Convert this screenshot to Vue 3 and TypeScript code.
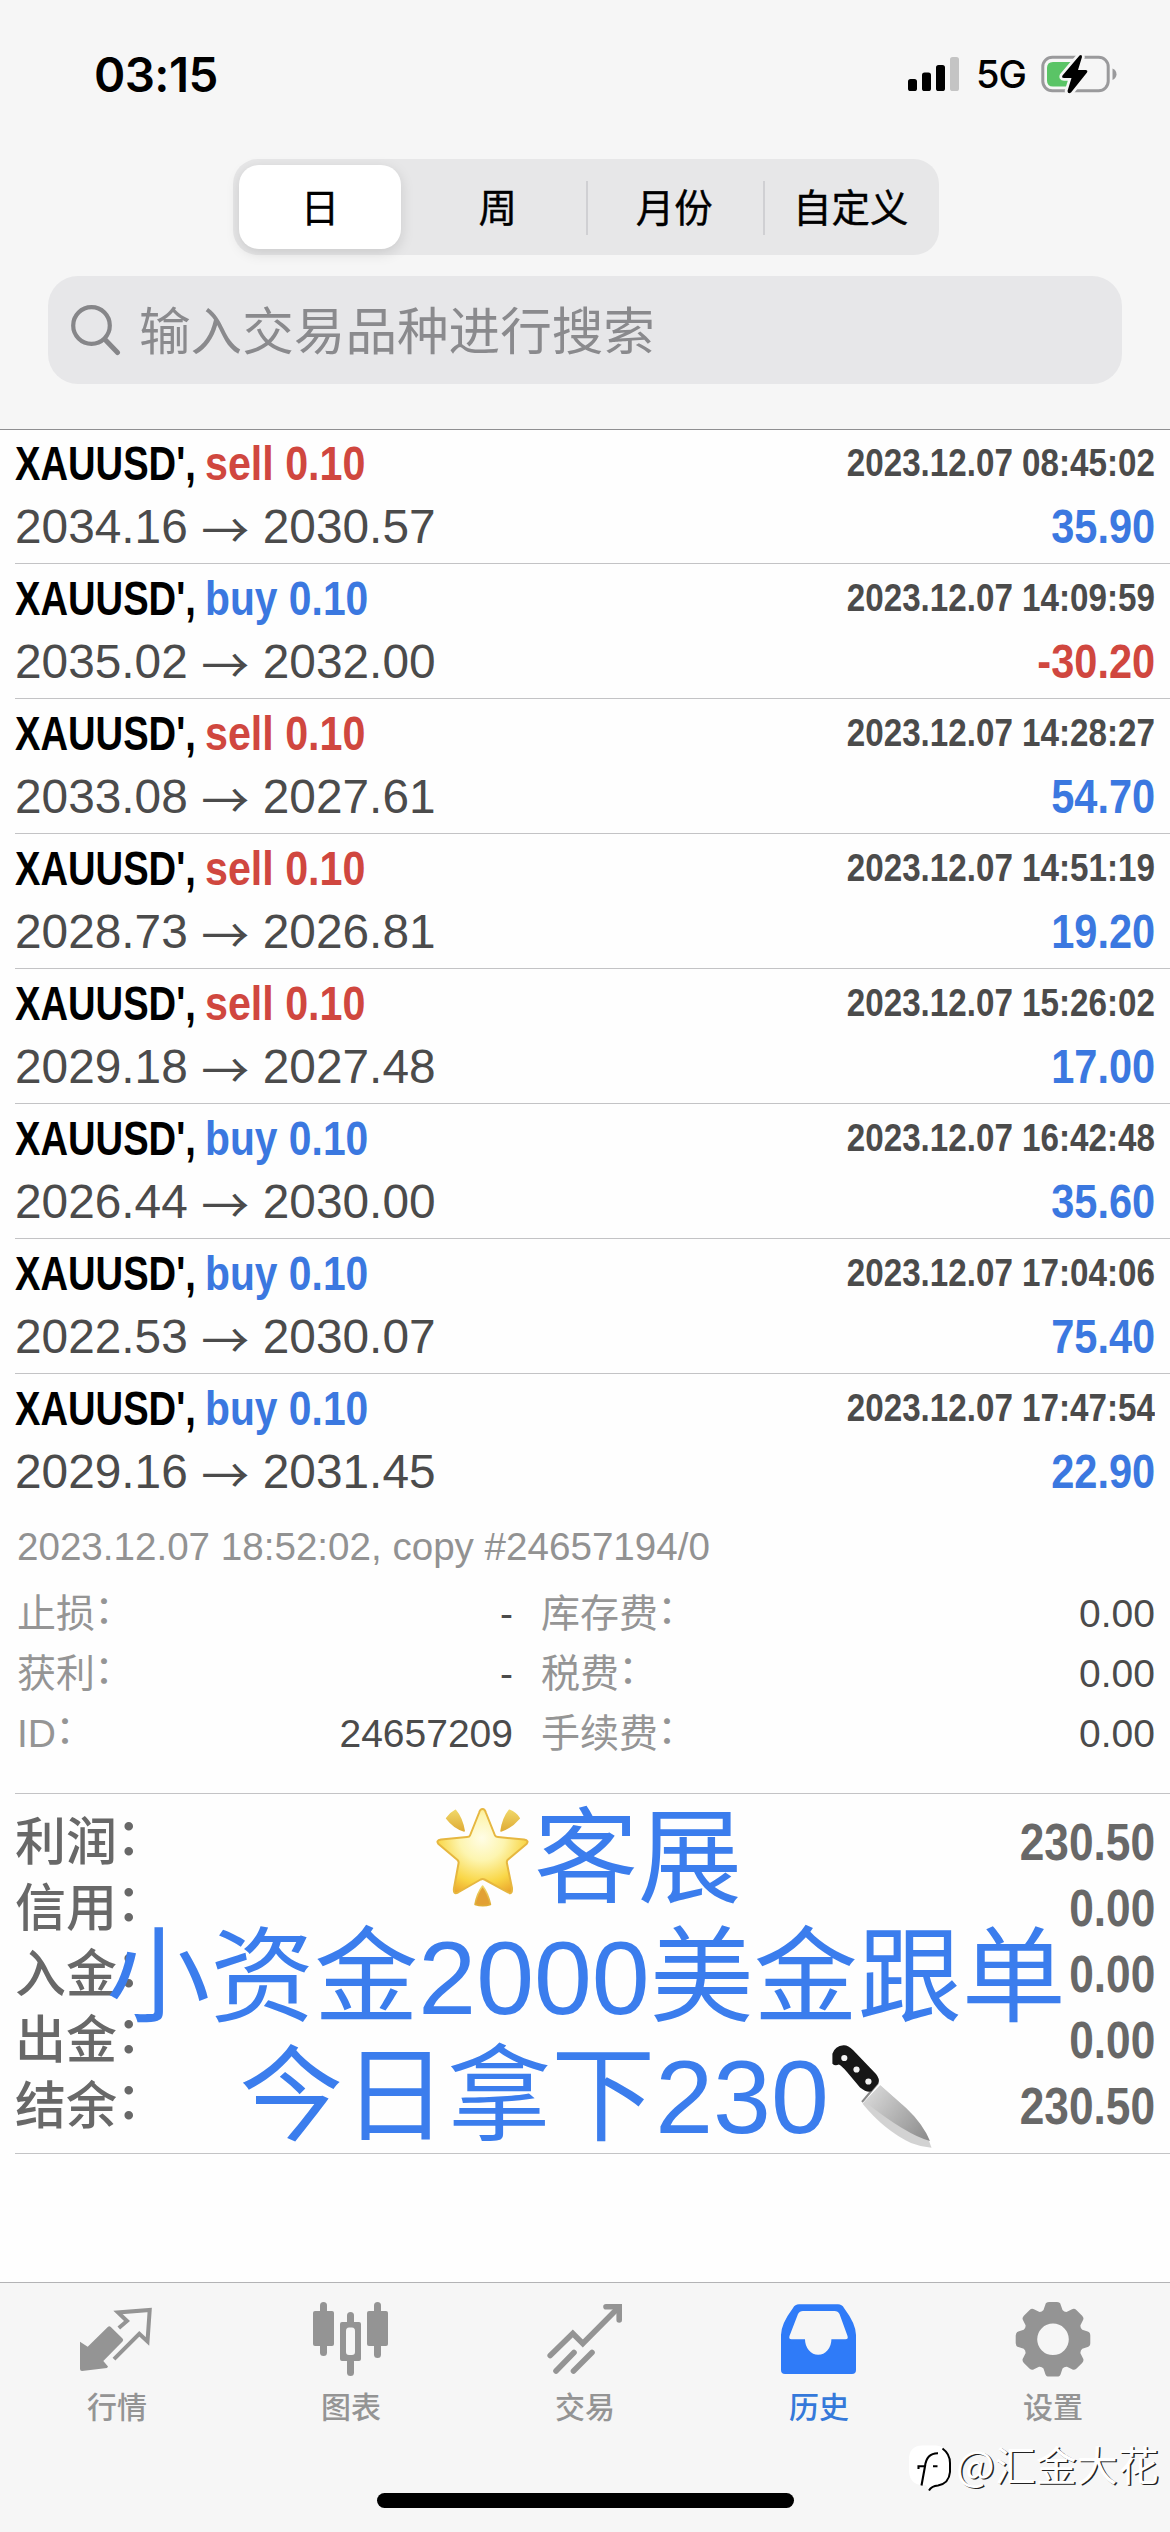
<script setup lang="ts">
interface Deal {
  side: 'sell' | 'buy'
  open: string
  close: string
  time: string
  profit: string
}

const periods = ['日', '周', '月份', '自定义']

const deals: Deal[] = [
  { side: 'sell', open: '2034.16', close: '2030.57', time: '2023.12.07 08:45:02', profit: '35.90' },
  { side: 'buy', open: '2035.02', close: '2032.00', time: '2023.12.07 14:09:59', profit: '-30.20' },
  { side: 'sell', open: '2033.08', close: '2027.61', time: '2023.12.07 14:28:27', profit: '54.70' },
  { side: 'sell', open: '2028.73', close: '2026.81', time: '2023.12.07 14:51:19', profit: '19.20' },
  { side: 'sell', open: '2029.18', close: '2027.48', time: '2023.12.07 15:26:02', profit: '17.00' },
  { side: 'buy', open: '2026.44', close: '2030.00', time: '2023.12.07 16:42:48', profit: '35.60' },
  { side: 'buy', open: '2022.53', close: '2030.07', time: '2023.12.07 17:04:06', profit: '75.40' },
  { side: 'buy', open: '2029.16', close: '2031.45', time: '2023.12.07 17:47:54', profit: '22.90' },
]

const details = [
  ['止损', '-', '库存费', '0.00'],
  ['获利', '-', '税费', '0.00'],
  ['ID', '24657209', '手续费', '0.00'],
]

const totals = [
  ['利润', '230.50'],
  ['信用', '0.00'],
  ['入金', '0.00'],
  ['出金', '0.00'],
  ['结余', '230.50'],
]

const tabs = [
  { id: 'quotes', label: '行情' },
  { id: 'charts', label: '图表' },
  { id: 'trade', label: '交易' },
  { id: 'history', label: '历史' },
  { id: 'settings', label: '设置' },
]

// Eight-tooth gear outline around the centre (42, 41.3)
function gearPath(): string {
  const at = (r: number, deg: number) => {
    const a = (deg * Math.PI) / 180
    return `${(42 + r * Math.cos(a)).toFixed(2)} ${(41.3 + r * Math.sin(a)).toFixed(2)}`
  }
  let d = ''
  for (let i = 0; i < 8; i++) {
    const c = i * 45
    d += `${i ? 'L' : 'M'}${at(30.8, c - 18)}L${at(35.5, c - 12.5)}Q${at(37.8, c - 11)} ${at(37.5, c - 6)}`
    d += `L${at(37.5, c + 6)}Q${at(37.8, c + 11)} ${at(35.5, c + 12.5)}L${at(30.8, c + 18)}Q${at(29.4, c + 22.5)} ${at(30.8, c + 27)}`
  }
  return d + 'Z'
}
const gear = gearPath() + 'M57.8 41.3a15.8 15.8 0 1 0-31.6 0a15.8 15.8 0 1 0 31.6 0Z'
</script>

<template>
  <div class="page">
    <header class="header">
      <div class="status">
        <span class="clock">03:15</span>
        <div class="indicators">
          <svg class="signal" width="52" height="36" viewBox="0 0 52 36">
            <rect x="0" y="23" width="9" height="12" rx="2.6" />
            <rect x="14" y="16.5" width="9" height="18.5" rx="2.6" />
            <rect x="28" y="9" width="9" height="26" rx="2.6" />
            <rect x="42" y="1" width="9" height="34" rx="2.6" fill="#c4c4c4" />
          </svg>
          <span class="network">5G</span>
          <svg width="76" height="42" viewBox="0 0 76 42">
            <rect x="1.8" y="4.2" width="65.4" height="33.6" rx="9.5" fill="none" stroke="#9a9a9c" stroke-width="3" />
            <path d="M71.5 15.5q4 1.8 4 5.7t-4 5.7Z" fill="#9a9a9c" />
            <path d="M12 9h19v24.5H12q-6 0-6-6V15q0-6 6-6Z" fill="#5ac466" />
            <path d="M38.5 2.5L21.500 22.5Q20.3 25 23 25H30.5L26.5 38Q27 41.5 30 39.5L46 19.5Q47.2 17 44.5 17H37L41 4Q41 1 38.5 2.5Z" fill="#000" stroke="#f6f6f6" stroke-width="5.5" paint-order="stroke" />
          </svg>
        </div>
      </div>
      <div class="segments">
        <div v-for="(p, i) in periods" :key="p" class="segment" :class="{ picked: i === 0 }">{{ p }}</div>
      </div>
      <div class="search">
        <svg width="50" height="51" viewBox="0 0 50 51" fill="none" stroke="#868689" stroke-linecap="round">
          <circle cx="20.5" cy="20.5" r="18.3" stroke-width="4.2" />
          <path d="M34 34.5L46.5 47.5" stroke-width="5" />
        </svg>
        <span>输入交易品种进行搜索</span>
      </div>
    </header>

    <main class="content">
      <section class="deals">
        <article v-for="d in deals" :key="d.time" class="deal">
          <div class="line top">
            <span class="symbol"><b>XAUUSD',</b></span>
            <span class="volume" :class="d.side">{{ d.side }} 0.10</span>
            <span class="time">{{ d.time }}</span>
          </div>
          <div class="line bottom">
            <span>{{ d.open }}</span>
            <span class="arrow">→</span>
            <span>{{ d.close }}</span>
            <span class="profit" :class="{ loss: d.profit.startsWith('-') }">{{ d.profit }}</span>
          </div>
        </article>
      </section>

      <section class="details">
        <p class="comment">2023.12.07 18:52:02, copy #24657194/0</p>
        <div v-for="r in details" :key="r[0]" class="detail">
          <span class="label">{{ r[0] }}<i>：</i></span>
          <span class="value left">{{ r[1] }}</span>
          <span class="label">{{ r[2] }}<i>：</i></span>
          <span class="value">{{ r[3] }}</span>
        </div>
      </section>

      <section class="totals">
        <div v-for="t in totals" :key="t[0]" class="total">
          <span class="name">{{ t[0] }}<i>：</i></span>
          <span class="sum">{{ t[1] }}</span>
        </div>
        <div class="banner">
          <p>
            <svg class="emoji" width="104" height="104" viewBox="0 0 104 104">
              <defs>
                <radialGradient id="starGlow" cx="52" cy="34" r="64" gradientUnits="userSpaceOnUse">
                  <stop offset="0" stop-color="#fffde6" />
                  <stop offset=".35" stop-color="#fdf5b0" />
                  <stop offset=".7" stop-color="#f9d646" />
                  <stop offset="1" stop-color="#e89a26" />
                </radialGradient>
                <linearGradient id="ray" x1="0" y1="0" x2="0" y2="1">
                  <stop offset="0" stop-color="#f0d768" />
                  <stop offset="1" stop-color="#dfab35" />
                </linearGradient>
              </defs>
              <g fill="url(#ray)" stroke="url(#ray)" stroke-width="1.5" stroke-linejoin="round">
                <path d="M25.4 6.3Q32 14 34.2 27Q24 24 16.600 14.3Q20 9 25.4 6.3Z" />
                <path d="M79.3 6.3Q73 14 71 27Q81 24 89.3 14.3Q86 9 79.3 6.3Z" />
                <path d="M52.6 82Q58 89 60.5 100.5Q53 103 45 100.5Q47 89 52.6 82Z" fill="#e2a034" />
              </g>
              <path d="M52.6 5Q55 5 56 9L65 31.5Q66 33 68 33L94 35.5Q99.5 36.500 96.5 40L77.5 56Q76.5 57.5 77 59.5L82 84Q82.5 91 78 88.5L54.5 75.5Q52.6 74.5 50.7 75.5L28 88.5Q23 91 24 84L28.5 59.5Q29 57.5 27.5 56L8.500 40Q5.500 36.5 11 35.5L37 33Q39.5 33 40 31.5L49 9Q50 5 52.6 5Z" fill="url(#starGlow)" stroke="#e6b740" stroke-width="2" stroke-linejoin="round" />
            </svg>客展
          </p>
          <p>小资金2000美金跟单</p>
          <p>
            今日拿下230<svg class="emoji" width="104" height="104" viewBox="0 0 104 104">
              <defs>
                <linearGradient id="blade" x1="36" y1="50" x2="98" y2="98" gradientUnits="userSpaceOnUse">
                  <stop offset="0" stop-color="#dadada" />
                  <stop offset=".6" stop-color="#ababab" />
                  <stop offset="1" stop-color="#8c8c8c" />
                </linearGradient>
              </defs>
              <path d="M51.2 43.3L77 66Q96 83 102.5 105.7Q92 105 82 101Q55 88 33.6 61.7Z" fill="#d2d2d2" />
              <path d="M51.2 43.3L77 66Q94 82 101 99Q78 93 35.5 59.5Z" fill="url(#blade)" />
              <path d="M49 41L33 60" stroke="#888" stroke-width="2" />
              <path d="M14.5 3.3Q6 4 3.4 11.7V21.7Q6 24.5 9.900 22.5Q13 24 18 30L31 45.5Q38 51 42.4 49.3L49.5 41Q51 37 47 32L24 8Q19 3 14.5 3.3Z" fill="#171717" />
              <g fill="#f4f4f4">
                <circle cx="15.3" cy="16" r="3.1" />
                <circle cx="27.5" cy="27.5" r="3.1" />
                <circle cx="39.4" cy="39.5" r="3.1" />
              </g>
            </svg>
          </p>
        </div>
      </section>
    </main>

    <nav class="tabs">
      <div v-for="t in tabs" :key="t.id" class="tab" :class="{ active: t.id === 'history' }">
        <svg width="84" height="84" viewBox="0 0 84 84" fill="currentColor">
          <template v-if="t.id === 'quotes'">
            <path d="M5 43.7L12.7 48.7L32.8 29Q34.3 27.5 35.8 29L47.5 40.6Q49 42 47.5 43.5L28.3 63L33 68.5L32 70L7 73Q5 73 5 71Z" />
            <path d="M43.8 30L52 23L43 14.5L74.7 12L72.5 43.5L64.3 35.8L39 61.2" fill="none" stroke="currentColor" stroke-width="4" />
          </template>
          <template v-else-if="t.id === 'charts'">
            <rect x="11" y="4" width="7" height="54" rx="3.5" />
            <rect x="4" y="13" width="21" height="35" rx="2" />
            <rect x="65" y="4" width="7" height="56" rx="3.5" />
            <rect x="58" y="13" width="21" height="35" rx="2" />
            <rect x="38" y="14" width="7" height="14" rx="3.5" />
            <rect x="38" y="60" width="7" height="18" rx="3.5" />
            <path fill-rule="evenodd" d="M33 24H50Q52 24 52 26V61Q52 63 50 63H33Q31 63 31 61V26Q31 24 33 24ZM40 29.5Q37 29.5 37 33V54Q37 57 40 57H43Q46 57 46 54V33Q46 29.5 43 29.5Z" />
          </template>
          <g v-else-if="t.id === 'trade'" fill="none" stroke="currentColor" stroke-width="5.6" stroke-linecap="round" stroke-linejoin="miter">
            <path d="M7.2 57.5L29.8 35.5L39.8 45.5L75 10" />
            <path d="M63 8.8H76.2V22" />
            <path d="M13 73L31 54.5M30.5 73L49 54.5" />
          </g>
          <path v-else-if="t.id === 'history'" fill-rule="evenodd" d="M22 6.3H61Q65 6.3 67 10Q79 26 79 37V72Q79 76 75 76H8Q4 76 4 72V37Q4 26 16 10Q18 6.3 22 6.3ZM26 13Q22.5 13 21 16L12.5 38Q11.5 41.3 14.5 41.3H28A13.2 15.5 0 0 0 54.4 41.3H68.5Q71.5 41.3 70.5 38L62.5 16Q61 13 57.5 13Z" />
          <path v-else fill-rule="evenodd" :d="gear" />
        </svg>
        <span>{{ t.label }}</span>
      </div>
      <div class="home-bar"></div>
      <div class="watermark">
        <svg width="44" height="46" viewBox="0 0 44 46" fill="none">
          <path d="M14 .5H28Q41 2 41 15V25Q41 38 28 40Q23 41 21 45L18 40H12Q1 38 1 25V14Q1 1 14 .5Z" fill="#fff" />
          <path d="M34.5 3.500Q42 9 42 18V27Q41 38.500 30 40.500Q23.500 41 21 45.500" stroke="#000" stroke-width="2" />
          <path d="M30 8.200Q18.500 8 17 21.300M10.500 24V21.300H17L13.500 40.500M25 21.300H29.500" stroke="#000" stroke-width="2.100" />
        </svg>
        <span>@汇金大花</span>
      </div>
    </nav>
  </div>
</template>

<style>
body {
  margin: 0;
}
</style>

<style scoped>
.page {
  display: flex;
  flex-direction: column;
  width: 1170px;
  height: 2532px;
  overflow: hidden;
  background: #fefefe;
  font-family: 'Liberation Sans', 'Noto Sans CJK SC', sans-serif;
  white-space: nowrap;
}
p {
  margin: 0;
}
i {
  display: inline-block;
  font-style: normal;
  transform: translate(-0.02em, -0.09em);
}
.header {
  box-sizing: border-box;
  height: 430px;
  background: #f6f6f6;
  border-bottom: 1px solid #8f8f91;
}
.status {
  display: flex;
  justify-content: space-between;
  height: 148px;
  padding: 0 53px 0 94px;
  font-family: Inter, sans-serif;
  line-height: 150px;
}
.clock {
  font-size: 47.5px;
  font-weight: 600;
  letter-spacing: -0.6px;
}
.indicators {
  display: flex;
  align-items: center;
}
.network {
  margin: 0 15px 0 16px;
  font-size: 38px;
  font-weight: 500;
  letter-spacing: -1px;
}
.segments {
  display: flex;
  box-sizing: border-box;
  width: 706px;
  height: 96px;
  margin: 11px auto 0 233px;
  padding: 6px 0;
  border-radius: 25px;
  background: #e7e7e8;
}
.segment {
  position: relative;
  width: 176.5px;
  font-family: 'Noto Sans CJK SC', sans-serif;
  font-size: 38.5px;
  line-height: 80px;
  text-align: center;
  -webkit-text-stroke: 0.4px currentColor;
}
.segment.picked {
  width: 162px;
  margin: 0 8.5px 0 6px;
  border-radius: 20px;
  background: #fff;
  box-shadow: 0 4px 14px rgba(0, 0, 0, 0.13);
}
.segment:nth-child(n + 3)::before {
  content: '';
  position: absolute;
  left: 0;
  top: 16px;
  width: 2px;
  height: 54px;
  background: #d0d0d3;
}
.search {
  display: flex;
  align-items: center;
  box-sizing: border-box;
  height: 108px;
  margin: 21px 48px 0;
  padding-left: 23px;
  border-radius: 30px;
  background: #e7e7e9;
  color: #8a8a8d;
  font-family: 'Noto Sans CJK SC', sans-serif;
  font-size: 51.6px;
  line-height: 60px;
}
.search span {
  margin-left: 18px;
  padding-bottom: 5px;
}
.content {
  flex: 1;
}
.deals {
  margin-top: -1px;
}
.deal {
  box-sizing: border-box;
  height: 135px;
  margin-left: 15px;
  padding-right: 15px;
  border-bottom: 1px solid #c3c3c5;
}
.deal:last-child {
  border-color: transparent;
}
.line {
  display: flex;
  font-size: 48px;
}
.top {
  line-height: 69px;
  font-weight: 700;
}
.symbol {
  width: 190px;
}
.symbol b {
  display: inline-block;
  transform: scaleX(0.795);
  transform-origin: left;
}
.volume {
  display: inline-block;
  transform: scaleX(0.858);
  transform-origin: left;
  color: #d0473f;
}
.volume.buy {
  transform: scaleX(0.85);
  color: #3b78e0;
}
.time {
  display: inline-block;
  margin-left: auto;
  transform: scaleX(0.873);
  transform-origin: right;
  color: #4b4b4b;
  font-size: 38px;
  line-height: 68px;
}
.bottom {
  color: #4b4b4b;
  font-size: 47.8px;
  line-height: 58px;
}
.arrow {
  width: 75px;
  text-align: center;
  font-family: 'Noto Sans CJK SC', sans-serif;
  font-size: 48px;
}
.profit {
  margin-left: auto;
  transform: scaleX(0.865);
  transform-origin: right;
  color: #3b78e0;
  font-size: 48px;
  font-weight: 700;
}
.profit.loss {
  color: #d0473f;
}
.details {
  padding: 8px 15px 0 17px;
  font-size: 39px;
  line-height: 60px;
  color: #4b4b4b;
}
.comment {
  margin-bottom: 7px;
  color: #929292;
  font-size: 38.6px;
}
.detail {
  display: flex;
}
.label {
  color: #959595;
}
.value {
  margin-left: auto;
}
.value.left {
  width: 300px;
  text-align: right;
}
.detail .label:first-child {
  width: 196px;
}
.detail .value.left {
  margin: 0 28px 0 0;
}
.totals {
  position: relative;
  margin: 29px 0 0 15px;
  padding: 16px 15px 13px 0;
  border-top: 1px solid #c3c3c5;
  border-bottom: 1px solid #c3c3c5;
}
.total {
  display: flex;
  justify-content: space-between;
  color: #686868;
  font-size: 51px;
  line-height: 66px;
}
.name {
  font-weight: 500;
}
.sum {
  transform: scaleX(0.867);
  transform-origin: right;
  font-weight: 700;
}
.banner {
  position: absolute;
  top: 6px;
  left: -14px;
  width: 1170px;
  color: #3b7ded;
  font-size: 104px;
  line-height: 119px;
  text-align: center;
}
.emoji {
  overflow: visible;
  vertical-align: -13px;
}
.tabs {
  position: relative;
  display: flex;
  box-sizing: border-box;
  height: 250px;
  padding-top: 15px;
  background: #f6f6f6;
  border-top: 1px solid #b3b3b5;
}
.tab {
  display: flex;
  flex-direction: column;
  align-items: center;
  width: 234px;
  color: #949494;
  font-family: 'Noto Sans CJK SC', sans-serif;
  font-size: 30px;
  font-weight: 500;
  line-height: 47px;
}
.tab.active {
  color: #2f7bf8;
}
.tab.active span {
  color: #3579da;
}
.home-bar {
  position: absolute;
  top: 210px;
  left: 377px;
  width: 417px;
  height: 15px;
  border-radius: 8px;
  background: #000;
}
.watermark {
  position: absolute;
  top: 162px;
  left: 908px;
  display: flex;
  align-items: flex-start;
  color: #fff;
  font-family: 'Noto Sans CJK SC', sans-serif;
  font-size: 41px;
  line-height: 36px;
  text-shadow: 1.5px 1px 0 #222;
}
.watermark span {
  margin-left: 4px;
}
</style>
